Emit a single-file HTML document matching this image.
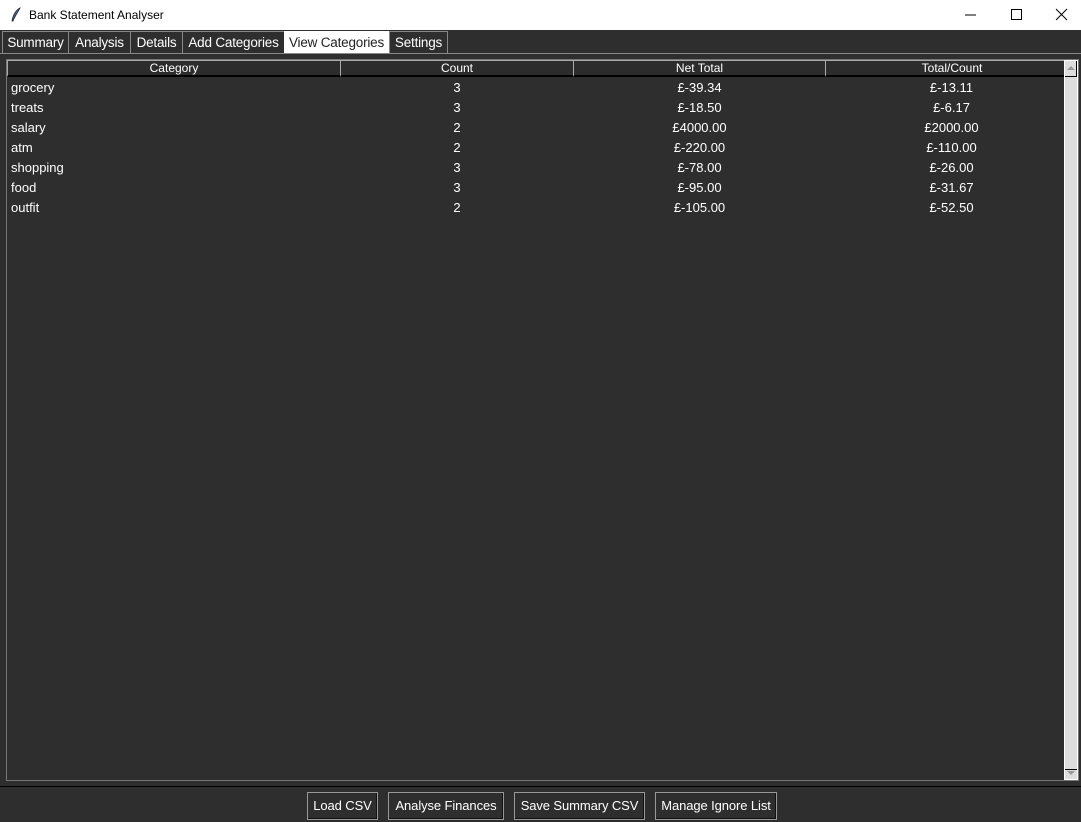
<!DOCTYPE html>
<html><head><style>
*{margin:0;padding:0;box-sizing:border-box}
body{width:1081px;height:822px;background:#2e2e2e;font-family:"Liberation Sans",Arial,sans-serif;position:relative;overflow:hidden;color:#fff}
.title{position:absolute;left:0;top:0;width:1081px;height:30px;background:#fff;color:#000;font-size:12px}
.title .t{position:absolute;left:29px;top:8px}
.tab{position:absolute;top:31px;height:22px;border:1px solid #888;border-bottom:none;font-size:13.5px;line-height:22px;color:#fff;background:#2e2e2e;text-align:center;white-space:nowrap;letter-spacing:-0.2px}
.tab.sel{background:#fff;color:#222;border-color:#fff}
.a{position:absolute}
.hdr{position:absolute;top:60px;height:17px;border:1px solid #aaa;border-bottom:2px solid #000;font-size:12px;text-align:center;line-height:15px;background:#2c2c2c}
.row{position:absolute;left:7px;width:1057px;height:20px;font-size:13px;line-height:20px}
.row span{position:absolute;text-align:center}
.btn{position:absolute;top:792px;height:28px;border:1px solid #999;box-shadow:inset -1px -1px 0 #111;font-size:13px;line-height:26px;text-align:center;background:#2e2e2e;white-space:nowrap;letter-spacing:-0.1px}
</style></head><body>
<div class="title">
<svg class="a" style="left:10px;top:7px" width="12" height="16" viewBox="0 0 12 16"><path d="M10 1 C6 3 3 8 2 14 L3 14 C5 9 8 5 10 1Z" fill="#4a6a9a" stroke="#223" stroke-width="0.8"/></svg>
<span class="t">Bank Statement Analyser</span>
<svg class="a" style="left:960px;top:8px" width="110" height="14"><line x1="5" y1="7" x2="16" y2="7" stroke="#000"/><rect x="51.5" y="1.5" width="10" height="10" fill="none" stroke="#000"/><path d="M96 1 L107 12 M107 1 L96 12" stroke="#000"/></svg>
</div>
<div class="tab" style="left:2px;width:67px">Summary</div>
<div class="tab" style="left:68px;width:63px">Analysis</div>
<div class="tab" style="left:130px;width:53px">Details</div>
<div class="tab" style="left:182px;width:103px">Add Categories</div>
<div class="tab sel" style="left:284px;width:105px">View Categories</div>
<div class="tab" style="left:389px;width:59px">Settings</div>
<div class="a" style="left:0;top:53px;width:1081px;height:1px;background:#888"></div>
<div class="a" style="left:6px;top:59px;width:1073px;height:722px;border:1px solid #777"></div>
<div class="hdr" style="left:7px;width:334px">Category</div>
<div class="hdr" style="left:340px;width:234px">Count</div>
<div class="hdr" style="left:573px;width:253px">Net Total</div>
<div class="hdr" style="left:825px;width:240px;padding-left:14px">Total/Count</div>
<div class="a" style="left:1064px;top:60px;width:14px;height:720px;background:#ddd;border:1px solid #fff"></div>
<div class="a" style="left:1065px;top:61px;width:12px;height:16px;border:1px solid #000;border-top:none;border-left:none"></div>
<svg class="a" style="left:1066px;top:65px" width="10" height="6"><path d="M1 5 L5 1 L9 5Z" fill="#999"/></svg>
<svg class="a" style="left:1066px;top:770px" width="10" height="6"><path d="M1 1 L5 5 L9 1Z" fill="#999"/></svg>
<div class="a" style="left:1065px;top:769px;width:12px;height:11px;border-top:1px solid #000"></div>
<div class="row" style="top:78px"><span style="left:4px">grocery</span><span style="left:333px;width:234px">3</span><span style="left:566px;width:253px">£-39.34</span><span style="left:818px;width:253px">£-13.11</span></div>
<div class="row" style="top:98px"><span style="left:4px">treats</span><span style="left:333px;width:234px">3</span><span style="left:566px;width:253px">£-18.50</span><span style="left:818px;width:253px">£-6.17</span></div>
<div class="row" style="top:118px"><span style="left:4px">salary</span><span style="left:333px;width:234px">2</span><span style="left:566px;width:253px">£4000.00</span><span style="left:818px;width:253px">£2000.00</span></div>
<div class="row" style="top:138px"><span style="left:4px">atm</span><span style="left:333px;width:234px">2</span><span style="left:566px;width:253px">£-220.00</span><span style="left:818px;width:253px">£-110.00</span></div>
<div class="row" style="top:158px"><span style="left:4px">shopping</span><span style="left:333px;width:234px">3</span><span style="left:566px;width:253px">£-78.00</span><span style="left:818px;width:253px">£-26.00</span></div>
<div class="row" style="top:178px"><span style="left:4px">food</span><span style="left:333px;width:234px">3</span><span style="left:566px;width:253px">£-95.00</span><span style="left:818px;width:253px">£-31.67</span></div>
<div class="row" style="top:198px"><span style="left:4px">outfit</span><span style="left:333px;width:234px">2</span><span style="left:566px;width:253px">£-105.00</span><span style="left:818px;width:253px">£-52.50</span></div>
<div class="a" style="left:0;top:786px;width:1081px;height:1px;background:#000"></div>
<div class="btn" style="left:307px;width:71px">Load CSV</div>
<div class="btn" style="left:388px;width:116px">Analyse Finances</div>
<div class="btn" style="left:514px;width:131px">Save Summary CSV</div>
<div class="btn" style="left:655px;width:122px">Manage Ignore List</div>
</body></html>
